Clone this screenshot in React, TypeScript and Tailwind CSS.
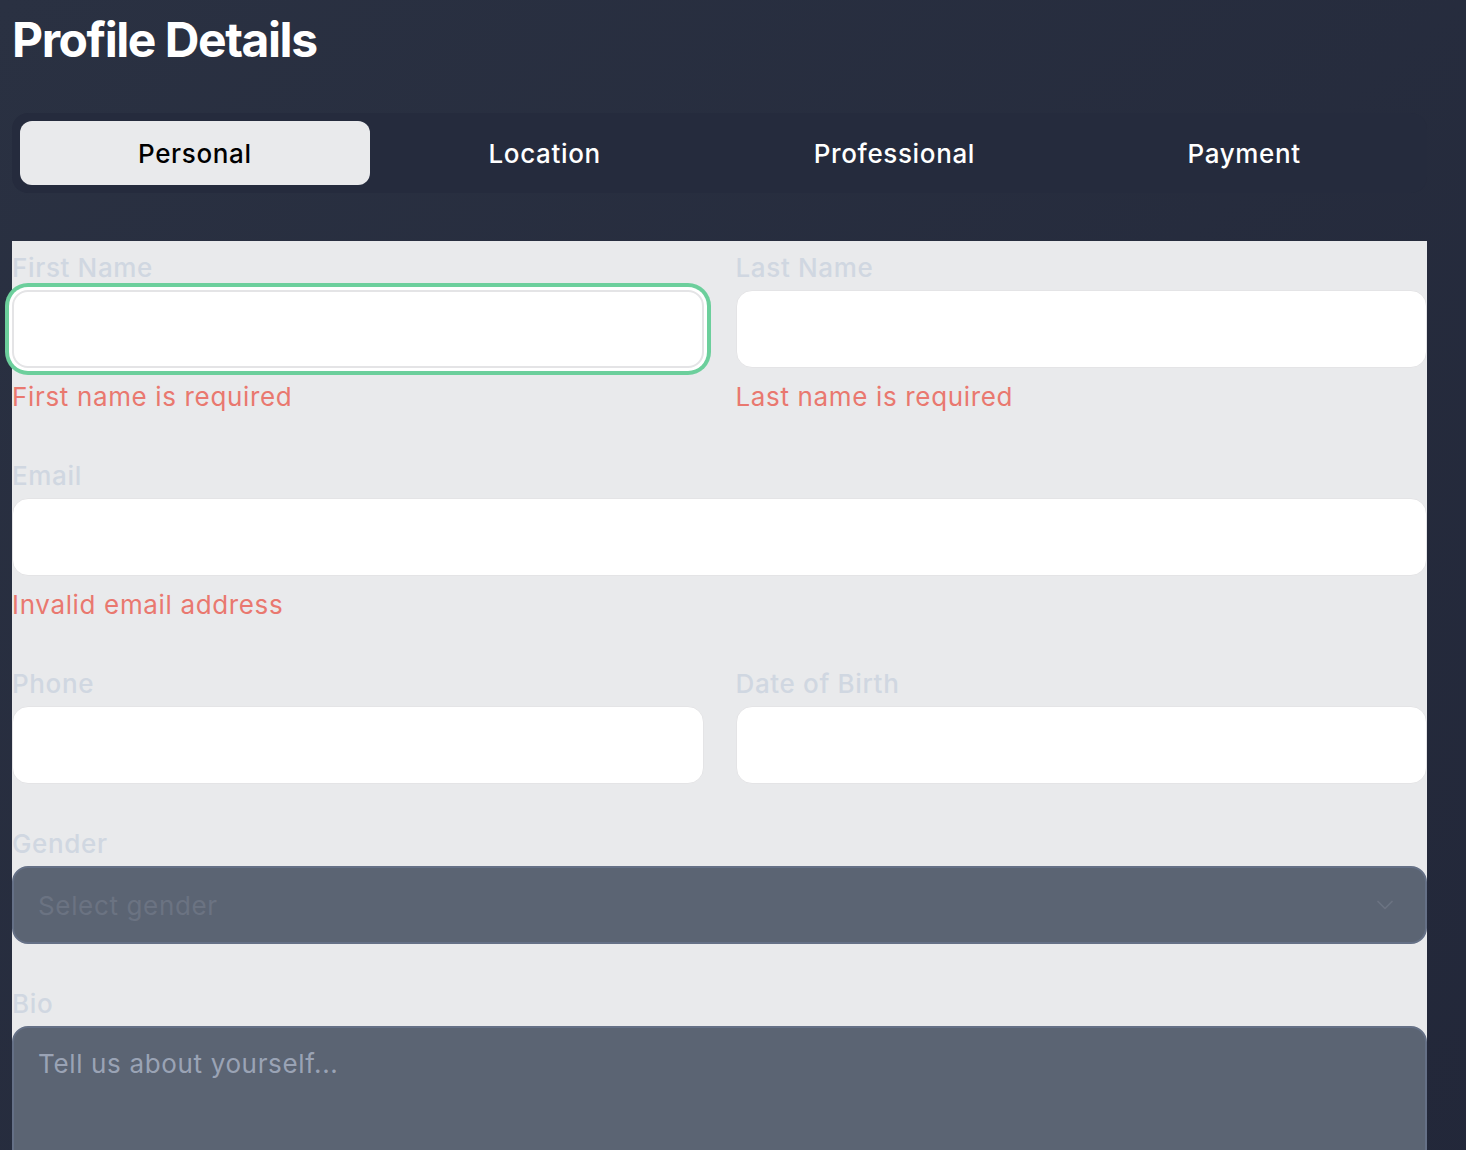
import React from 'react';
import { ChevronDown } from 'lucide-react';

const tabs = ['Personal', 'Location', 'Professional', 'Payment'];

interface FieldProps {
  label: string;
  error?: string;
  focused?: boolean;
}

const Field: React.FC<FieldProps> = ({ label, error, focused }) => (
  <div>
    <label className="block text-[26px] leading-[39px] mb-[3px] font-medium tracking-wide text-[#d0d7e1]">{label}</label>
    <input
      className={
        focused
          ? 'block w-full h-[78px] rounded-2xl bg-white border-2 border-[#e4e4e6] outline-none ring-4 ring-[#6ccf9c] ring-offset-[3px] ring-offset-white'
          : 'block w-full h-[78px] rounded-2xl bg-white border border-[#e4e4e6] outline-none'
      }
    />
    {error && <p className="mt-[9px] text-[26px] leading-[39px] tracking-wide text-[#e9786f]">{error}</p>}
  </div>
);

export default function App() {
  return (
    <div
      className="min-h-[1150px] w-full bg-gradient-to-br from-[#2a3142] to-[#222739] text-white pl-3 pt-4 overflow-hidden"
      style={{ fontFamily: 'Inter, "Noto Sans", sans-serif' }}
    >
      <div className="w-[1415px]">
        <h1 className="text-[48px] leading-none font-bold tracking-[-0.03em]">Profile Details</h1>

        <div className="mt-[49px] grid grid-cols-4 p-2 h-[80px] rounded-2xl bg-[#252b3d]">
          {tabs.map((tab, i) => (
            <button
              key={tab}
              className={
                i === 0
                  ? 'rounded-xl bg-[#e9eaec] text-black text-[26px] font-medium tracking-wide'
                  : 'rounded-xl text-white text-[26px] font-medium tracking-wide'
              }
            >
              {tab}
            </button>
          ))}
        </div>

        <div className="mt-[48px] bg-[#e9eaec] pt-[7px] pb-10 flex flex-col gap-[40px]">
          <div className="grid grid-cols-2 gap-x-8">
            <Field label="First Name" error="First name is required" focused />
            <Field label="Last Name" error="Last name is required" />
          </div>

          <Field label="Email" error="Invalid email address" />

          <div className="grid grid-cols-2 gap-x-8">
            <Field label="Phone" />
            <Field label="Date of Birth" />
          </div>

          <div>
            <label className="block text-[26px] leading-[39px] mb-[3px] font-medium tracking-wide text-[#d0d7e1]">Gender</label>
            <div className="flex items-center justify-between h-[78px] rounded-2xl bg-[#5b6473] border-2 border-[#657086] px-[24px]">
              <span className="text-[26px] tracking-wide text-[#6b7382]">Select gender</span>
              <ChevronDown className="w-7 h-7 text-[#6b7382] mr-[2px]" strokeWidth={1.5} />
            </div>
          </div>

          <div>
            <label className="block text-[26px] leading-[39px] mb-[3px] font-medium tracking-wide text-[#d0d7e1]">Bio</label>
            <textarea
              placeholder="Tell us about yourself..."
              className="block w-full h-[200px] rounded-2xl bg-[#5b6473] border-2 border-[#657086] px-[24px] py-[16px] text-[26px] tracking-wide placeholder:text-[#9aa3b5] outline-none resize-none"
            />
          </div>
        </div>
      </div>
    </div>
  );
}
